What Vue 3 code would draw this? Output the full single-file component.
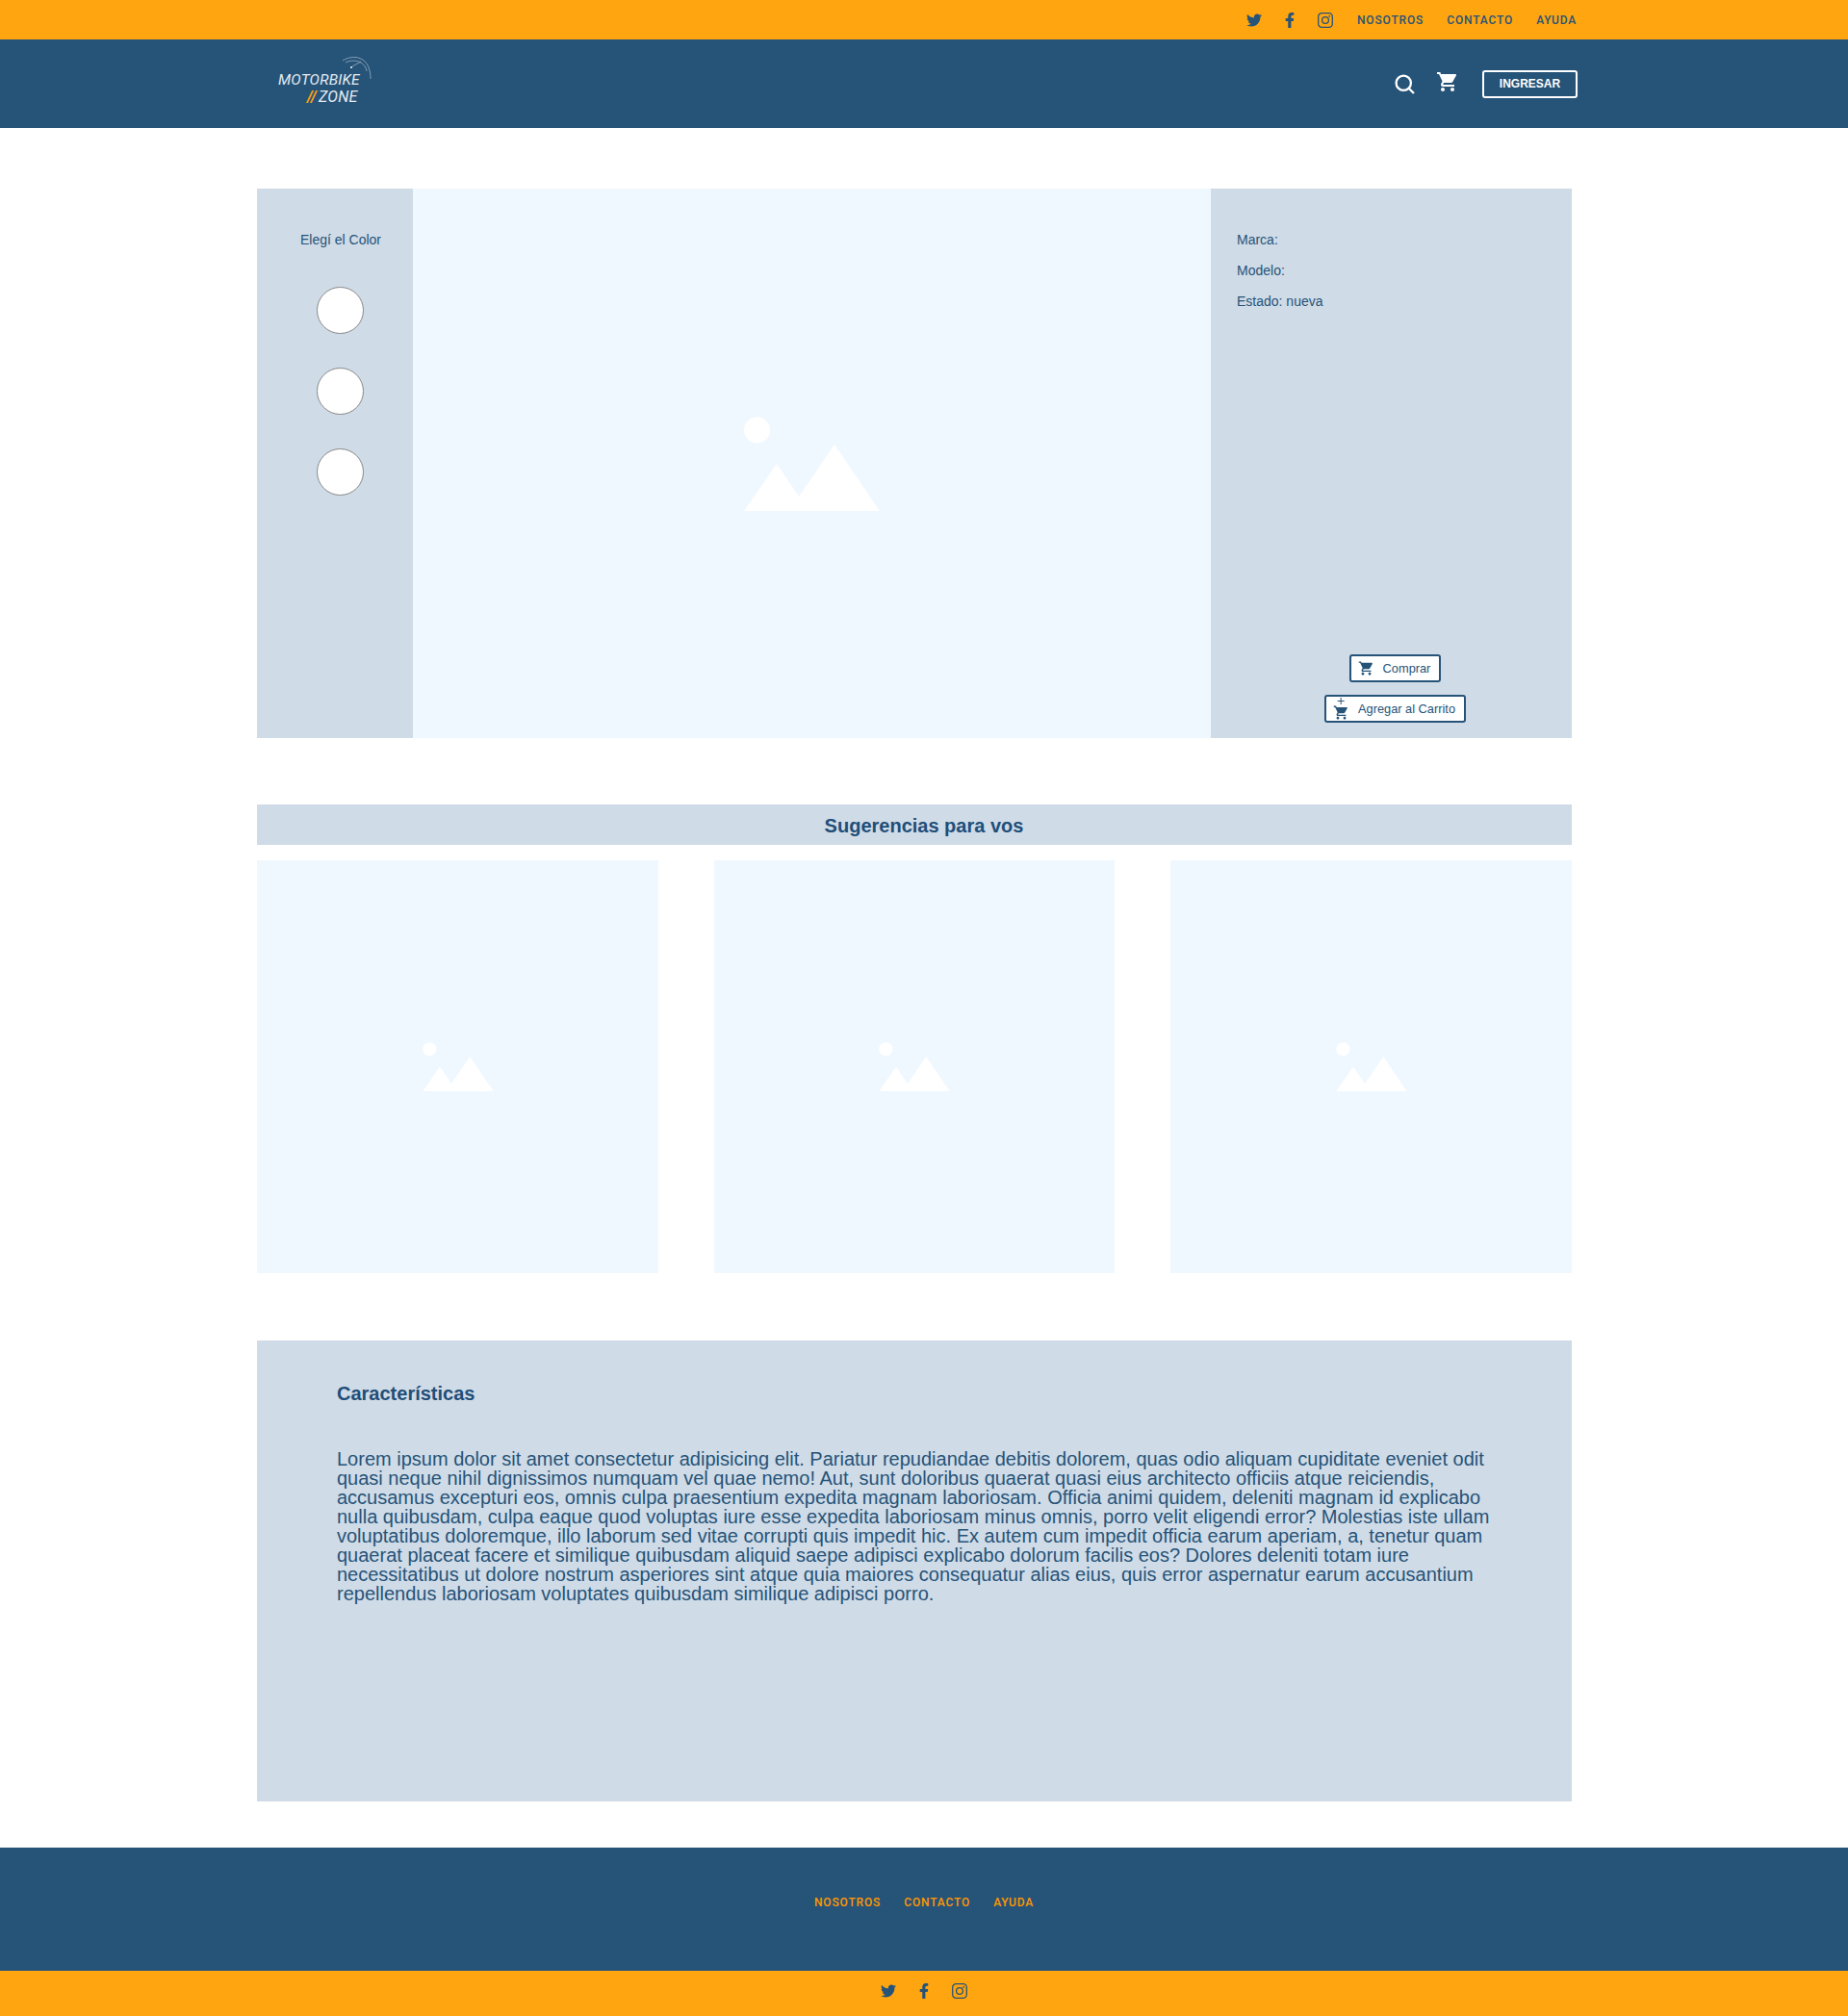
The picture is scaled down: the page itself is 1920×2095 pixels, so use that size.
<template>
  <div class="page">
    <div class="topbar">
      <a class="social" href="#" aria-label="twitter">
        <svg class="ic-tw" viewBox="0 0 512 512"><path :d="twitter" /></svg>
      </a>
      <a class="social" href="#" aria-label="facebook">
        <svg class="ic-fb" viewBox="0 0 320 512"><path :d="facebook" /></svg>
      </a>
      <a class="social" href="#" aria-label="instagram">
        <svg class="ic-ig" viewBox="0 0 16 16">
          <rect x="0.7" y="0.7" width="14.6" height="14.6" rx="3.6" />
          <circle cx="8" cy="8" r="3.4" />
          <circle class="dot" cx="12.2" cy="3.8" r="0.9" />
        </svg>
      </a>
      <nav class="toplinks">
        <a v-for="link in links" :key="link" href="#">{{ link }}</a>
      </nav>
    </div>

    <header class="header">
      <div class="logo">
        <svg class="logo-arc" viewBox="0 0 32 26">
          <path d="M1 5 C12 -2 30 0 30 24" />
          <path d="M4 7 C12 3 24 5 26 16" />
          <path d="M11 11 L20 6" />
          <circle cx="10" cy="12" r="1" />
        </svg>
        <span class="logo-top">MOTORBIKE</span>
        <span class="logo-bottom"><b>//</b>ZONE</span>
      </div>
      <div class="header-actions">
        <svg class="ic-search" viewBox="0 0 20 20">
          <circle cx="8.8" cy="8.8" r="7.3" />
          <path d="M14 14 L19 19" />
        </svg>
        <svg class="ic-cart" viewBox="0 0 24 24"><path :d="cart" /></svg>
        <button class="login">INGRESAR</button>
      </div>
    </header>

    <main class="main">
      <section class="hero">
        <aside class="colors">
          <p>Elegí el Color</p>
          <span v-for="n in 3" :key="n" class="swatch"></span>
        </aside>
        <div class="hero-img">
          <svg class="placeholder big" viewBox="0 0 141 98">
            <circle cx="13.5" cy="14" r="13.5" />
            <polygon points="0,98 34,49 57,83 94,29 141,98" />
          </svg>
        </div>
        <aside class="info">
          <div class="specs">
            <p>Marca:</p>
            <p>Modelo:</p>
            <p>Estado: nueva</p>
          </div>
          <div class="buy">
            <button class="btn">
              <svg class="btn-cart" viewBox="0 0 24 24"><path :d="cart" /></svg>
              Comprar
            </button>
            <button class="btn">
              <svg class="btn-add" viewBox="0 0 24 34">
                <path class="plus" d="M11.5 0 V10 M6.5 5 H16.5" />
                <path transform="translate(0 10)" :d="cart" />
              </svg>
              Agregar al Carrito
            </button>
          </div>
        </aside>
      </section>

      <h2 class="suggest-title">Sugerencias para vos</h2>
      <section class="cards">
        <div v-for="n in 3" :key="n" class="card">
          <svg class="placeholder" viewBox="0 0 141 98">
            <circle cx="13.5" cy="14" r="13.5" />
            <polygon points="0,98 34,49 57,83 94,29 141,98" />
          </svg>
        </div>
      </section>

      <section class="features">
        <h3>Características</h3>
        <p>{{ lorem }}</p>
      </section>
    </main>

    <footer>
      <nav class="footlinks">
        <a v-for="link in links" :key="link" href="#">{{ link }}</a>
      </nav>
      <div class="footbar">
        <a class="social" href="#" aria-label="twitter">
          <svg class="ic-tw" viewBox="0 0 512 512"><path :d="twitter" /></svg>
        </a>
        <a class="social" href="#" aria-label="facebook">
          <svg class="ic-fb" viewBox="0 0 320 512"><path :d="facebook" /></svg>
        </a>
        <a class="social" href="#" aria-label="instagram">
          <svg class="ic-ig" viewBox="0 0 16 16">
            <rect x="0.7" y="0.7" width="14.6" height="14.6" rx="3.6" />
            <circle cx="8" cy="8" r="3.4" />
            <circle class="dot" cx="12.2" cy="3.8" r="0.9" />
          </svg>
        </a>
      </div>
    </footer>
  </div>
</template>

<script setup>
const links = ['NOSOTROS', 'CONTACTO', 'AYUDA']

const twitter = 'M459.37 151.716c.325 4.548.325 9.097.325 13.645 0 138.72-105.583 298.558-298.558 298.558-59.452 0-114.68-17.219-161.137-47.106 8.447.974 16.568 1.299 25.34 1.299 49.055 0 94.213-16.568 130.274-44.832-46.132-.975-84.792-31.188-98.112-72.772 6.498.974 12.995 1.624 19.818 1.624 9.421 0 18.843-1.3 27.614-3.573-48.081-9.747-84.143-51.98-84.143-102.985v-1.299c13.969 7.797 30.214 12.67 47.431 13.319-28.264-18.843-46.781-51.005-46.781-87.391 0-19.492 5.197-37.36 14.294-52.954 51.655 63.675 129.3 105.258 216.365 109.807-1.624-7.797-2.599-15.918-2.599-24.04 0-57.828 46.782-104.934 104.934-104.934 30.213 0 57.502 12.67 76.67 33.137 23.715-4.548 46.456-13.32 66.599-25.34-7.798 24.366-24.366 44.833-46.132 57.827 21.117-2.273 41.584-8.122 60.426-16.243-14.292 20.791-32.161 39.308-52.628 54.253z'
const facebook = 'M279.14 288l14.22-92.66h-88.91v-60.13c0-25.35 12.42-50.06 52.24-50.06h40.42V6.26S260.43 0 225.36 0c-73.22 0-121.08 44.38-121.08 124.72v70.62H22.89V288h81.39v224h100.17V288z'
const cart = 'M7 18c-1.1 0-1.99.9-1.99 2S5.9 22 7 22s2-.9 2-2-.9-2-2-2zM1 2v2h2l3.6 7.59-1.35 2.45c-.16.28-.25.61-.25.96 0 1.1.9 2 2 2h12v-2H7.42c-.14 0-.25-.11-.25-.25l.03-.12.9-1.63h7.45c.75 0 1.41-.41 1.75-1.03l3.58-6.49c.08-.14.12-.31.12-.48 0-.55-.45-1-1-1H5.21l-.94-2H1zm16 16c-1.1 0-1.99.9-1.99 2s.89 2 1.99 2 2-.9 2-2-.9-2-2-2z'

const lorem = 'Lorem ipsum dolor sit amet consectetur adipisicing elit. Pariatur repudiandae debitis dolorem, quas odio aliquam cupiditate eveniet odit quasi neque nihil dignissimos numquam vel quae nemo! Aut, sunt doloribus quaerat quasi eius architecto officiis atque reiciendis, accusamus excepturi eos, omnis culpa praesentium expedita magnam laboriosam. Officia animi quidem, deleniti magnam id explicabo nulla quibusdam, culpa eaque quod voluptas iure esse expedita laboriosam minus omnis, porro velit eligendi error? Molestias iste ullam voluptatibus doloremque, illo laborum sed vitae corrupti quis impedit hic. Ex autem cum impedit officia earum aperiam, a, tenetur quam quaerat placeat facere et similique quibusdam aliquid saepe adipisci explicabo dolorum facilis eos? Dolores deleniti totam iure necessitatibus ut dolore nostrum asperiores sint atque quia maiores consequatur alias eius, quis error aspernatur earum accusantium repellendus laboriosam voluptates quibusdam similique adipisci porro.'
</script>

<style scoped>
.page {
  font-family: "Liberation Sans", Arial, sans-serif;
  color: #265378;
  background: #fff;
  min-height: 2095px;
}

a {
  text-decoration: none;
  color: inherit;
}

.topbar {
  height: 41px;
  background: #ffa510;
  display: flex;
  align-items: center;
  justify-content: flex-end;
  padding-right: 282px;
}

.social {
  display: flex;
  align-items: center;
  justify-content: center;
  width: 16px;
  height: 16px;
  margin-right: 21px;
}

.social svg {
  fill: #265378;
  display: block;
}

.ic-tw {
  width: 16px;
  height: 16px;
}

.ic-fb {
  width: 10px;
  height: 16px;
}

.ic-ig {
  width: 16px;
  height: 16px;
}

.social .ic-ig {
  fill: none;
  stroke: #265378;
  stroke-width: 1.3;
}

.social .ic-ig .dot {
  fill: #265378;
  stroke: none;
}

.toplinks {
  display: flex;
  gap: 24px;
  margin-left: 4px;
}

.toplinks a,
.footlinks a {
  font-family: Roboto, sans-serif;
  font-size: 12px;
  font-weight: 500;
  letter-spacing: 0.85px;
}

.header {
  height: 92px;
  background: #265378;
  display: flex;
  align-items: center;
  justify-content: space-between;
  padding: 0 281px 0 289px;
}

.logo {
  position: relative;
  display: flex;
  flex-direction: column;
  color: #e4ebf2;
  font-family: Roboto, sans-serif;
  font-style: italic;
  font-size: 15.5px;
  line-height: 18.5px;
  letter-spacing: 0.2px;
  margin-top: 10px;
}

.logo-bottom {
  padding-left: 30px;
  font-size: 16px;
}

.logo-bottom b {
  color: #ffa510;
  font-weight: 700;
  margin-right: 2px;
}

.logo-arc {
  position: absolute;
  left: 66px;
  top: -16px;
  width: 32px;
  height: 26px;
  fill: none;
  stroke: #a9bccd;
  stroke-width: 0.7;
}

.logo-arc circle {
  fill: #fff;
  stroke: none;
}

.header-actions {
  display: flex;
  align-items: center;
}

.ic-search {
  width: 21px;
  height: 21px;
  fill: none;
  stroke: #fff;
  stroke-width: 2.2;
  margin-right: 21px;
  position: relative;
  left: 1px;
}

.ic-cart {
  width: 24px;
  height: 24px;
  fill: #fff;
  margin: -4px 24px 0 2px;
}

.login {
  width: 99px;
  height: 29px;
  background: transparent;
  border: 2px solid #fff;
  border-radius: 3px;
  color: #fff;
  font-family: "Liberation Sans", sans-serif;
  font-size: 12px;
  font-weight: 700;
  padding: 0;
}

.main {
  margin: 63px 287px 0 267px;
}

.hero {
  display: flex;
  height: 571px;
}

.colors {
  width: 162px;
  background: #cfdbe7;
  display: flex;
  flex-direction: column;
  align-items: center;
  padding-left: 11px;
  box-sizing: border-box;
}

.colors p {
  margin: 45px 0 41px;
  padding-left: 1px;
  font-size: 14px;
  line-height: 16px;
}

.swatch {
  width: 49px;
  height: 49px;
  border-radius: 50%;
  background: #fff;
  border: 1px solid #888;
  box-sizing: border-box;
  margin-bottom: 35px;
}

.hero-img {
  flex: 1;
  background: #f0f8ff;
  display: flex;
  align-items: center;
  justify-content: center;
}

.placeholder {
  width: 74px;
  height: 51px;
  fill: #fff;
}

.placeholder.big {
  width: 141px;
  height: 98px;
}

.info {
  width: 375px;
  background: #cfdbe7;
  padding: 45px 0 16px 27px;
  box-sizing: border-box;
  display: flex;
  flex-direction: column;
  justify-content: space-between;
}

.specs p {
  margin: 0 0 16px;
  font-size: 14px;
  line-height: 16px;
}

.buy {
  display: flex;
  flex-direction: column;
  align-items: center;
  gap: 13px;
  padding-right: 19px;
}

.btn {
  height: 29px;
  display: flex;
  align-items: center;
  background: #fff;
  border: 2px solid #265378;
  border-radius: 3px;
  color: #265378;
  font-family: "Liberation Sans", sans-serif;
  font-size: 12.8px;
  padding: 0 9px 0 7px;
  gap: 9px;
}

.btn-cart {
  width: 17px;
  height: 17px;
  fill: #265378;
  display: block;
}

.btn-add {
  width: 17px;
  height: 24px;
  fill: #265378;
  display: block;
}

.btn-add .plus {
  fill: none;
  stroke: #265378;
  stroke-width: 1.4;
}

.suggest-title {
  margin: 69px 0 16px;
  height: 42px;
  line-height: 44px;
  background: #cfdbe7;
  text-align: center;
  font-size: 20px;
  font-weight: 700;
  color: #1f4e79;
  padding-left: 20px;
}

.cards {
  display: grid;
  grid-template-columns: repeat(3, 1fr);
  gap: 58px;
}

.card {
  height: 429px;
  background: #f0f8ff;
  display: flex;
  align-items: center;
  justify-content: center;
  padding-left: 1px;
}

.features {
  margin-top: 70px;
  height: 479px;
  background: #cfdbe7;
  padding: 44px 80px 0 83px;
  box-sizing: border-box;
}

.features h3 {
  margin: 0;
  font-size: 20px;
  line-height: 23px;
  color: #1f4e79;
}

.features p {
  margin: 46px 0 0;
  font-size: 20px;
  line-height: 20px;
}

footer {
  margin-top: 48px;
}

.footlinks {
  height: 128px;
  background: #265378;
  display: flex;
  justify-content: center;
  gap: 24px;
  padding-top: 50px;
  box-sizing: border-box;
  color: #ff9800;
}

.footbar {
  height: 47px;
  background: #ffa510;
  display: flex;
  align-items: center;
  justify-content: center;
  padding-bottom: 5px;
  box-sizing: border-box;
}

.footbar .social {
  margin: 0 10.5px;
}
</style>

<style>
body {
  margin: 0;
}
</style>
